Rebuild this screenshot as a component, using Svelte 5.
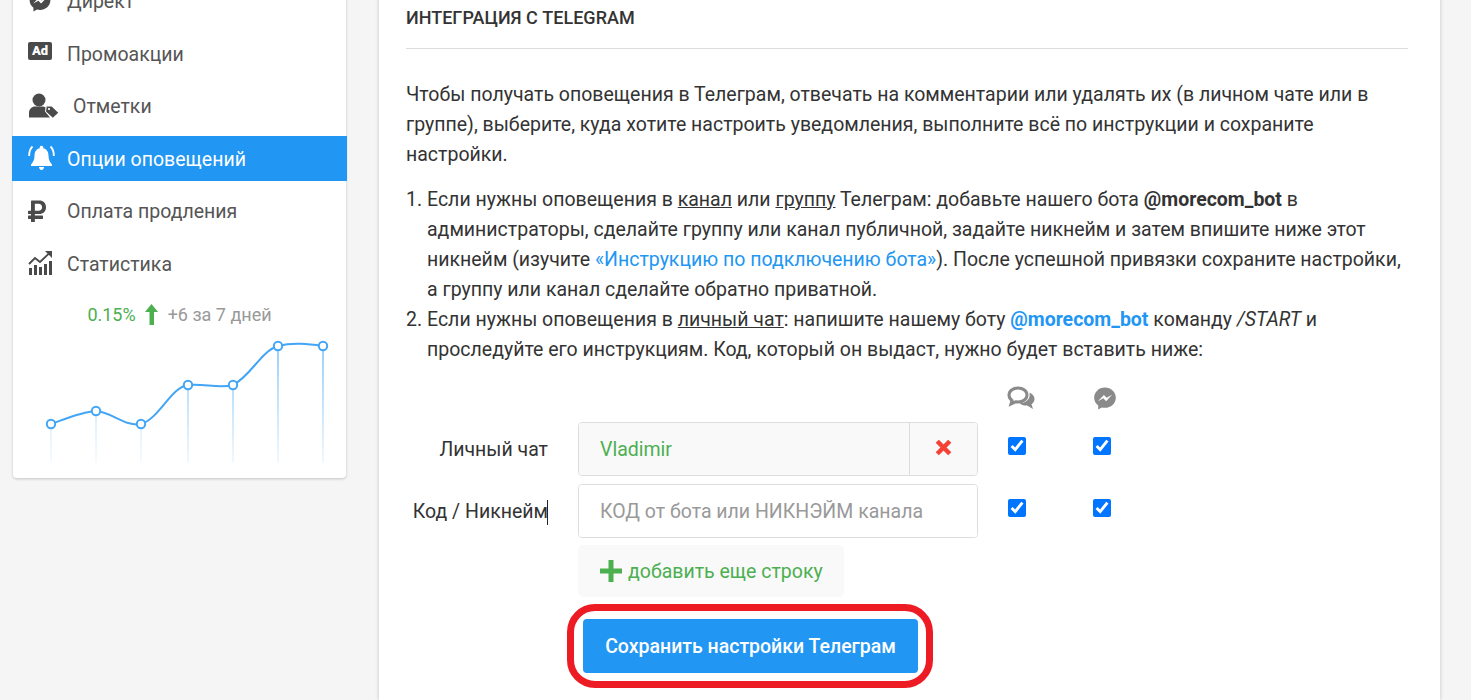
<script>
  const menu = [
    { label: 'Директ', icon: 'messenger' },
    { label: 'Промоакции', icon: 'ad' },
    { label: 'Отметки', icon: 'usertag' },
    { label: 'Опции оповещений', icon: 'bell', active: true },
    { label: 'Оплата продления', icon: 'ruble' },
    { label: 'Статистика', icon: 'stats' }
  ];

  // chart points, in the coordinates of the chart svg
  const points = [[38, 78], [83, 65], [128, 78], [175, 39], [220, 39], [265, 0], [310, 0]];
  const BOTTOM = 117;

  const messengerPath =
    'M224 32C15.9 32-77.5 278 84.6 400.6V480l75.7-42c142.2 39.8 285.4-59.9 285.4-198.7C445.8 124.8 346.5 32 224 32zm23.4 278.1L190 250.5 79.6 311.6l121.1-128.5 57.4 59.6 110.4-61.1-121.1 128.5z';
</script>

<div class="page">
  <aside class="sidebar">
    <nav class="menu">
      {#each menu as item}
        <div class="item" class:active={item.active}>
          <span class="icon">
            {#if item.icon === 'messenger'}
              <svg width="24" height="24" viewBox="0 0 448 512"><path fill="currentColor" d={messengerPath} /></svg>
            {:else if item.icon === 'ad'}
              <span class="ad">Ad</span>
            {:else if item.icon === 'usertag'}
              <svg width="31" height="25" viewBox="0 0 31 25">
                <circle cx="11" cy="7" r="6.5" fill="currentColor" />
                <path fill="currentColor" d="M1 24.500v-4.500c0-4 3-6.500 6-6.500h7c1.500 0 2.600.4 3.500 1l-.5 4 5 6z" />
                <path fill="currentColor" d="M18.700 13.500h5l6.500 6.300-5.400 5-6.800-6.400z" />
                <circle cx="21" cy="16" r="1.100" fill="#fff" />
              </svg>
            {:else if item.icon === 'bell'}
              <svg width="27" height="26" viewBox="0 0 27 26">
                <path fill="currentColor" d="M13.500 3c4.500 0 7 3.300 7 7.500 0 4.500 1.500 6.700 3.500 9v1.500H3v-1.500c2-2.300 3.500-4.500 3.500-9C6.500 6.300 9 3 13.500 3z" />
                <path fill="currentColor" d="M11 22h5c0 1.500-1 3-2.500 3S11 23.500 11 22z" />
                <circle cx="13.500" cy="2.500" r="1.800" fill="currentColor" />
                <path fill="none" stroke="currentColor" stroke-width="1.800" d="M4.500 1.500C2 4 1 7 1.200 11M22.500 1.500C25 4 26 7 25.800 11" />
              </svg>
            {:else if item.icon === 'ruble'}
              <svg width="18" height="24" viewBox="0 0 384 512"><path fill="currentColor" d="M239.360 320C324.480 320 384 260.542 384 175.071S324.480 32 239.360 32H76c-6.627 0-12 5.373-12 12v206.632H12c-6.627 0-12 5.373-12 12V308c0 6.627 5.373 12 12 12h52v32H12c-6.627 0-12 5.373-12 12v52c0 6.627 5.373 12 12 12h52v52c0 6.627 5.373 12 12 12h58.560c6.627 0 12-5.373 12-12v-52H308c6.627 0 12-5.373 12-12v-52c0-6.627-5.373-12-12-12H146.560v-32h92.800zm-92.800-219.252h78.720c46.720 0 74.880 29.110 74.880 74.323 0 45.832-28.160 75.561-76.160 75.561h-77.440V100.748z" /></svg>
            {:else}
              <svg width="24" height="24" viewBox="0 0 24 24">
                <path fill="currentColor" d="M1 17h3v7H1zM6 14h3v10H6zM11 16h3v8h-3zM16 13h3v11h-3zM21 10h3v14h-3z" />
                <path fill="none" stroke="currentColor" stroke-width="1.800" d="M1 13l6-6 5 4 9.500-9" />
                <path fill="currentColor" d="M17 0h7v7z" />
              </svg>
            {/if}
          </span>
          <span class="label" class:shifted={item.icon === 'usertag'}>{item.label}</span>
        </div>
      {/each}
    </nav>

    <div class="stats">
      <span class="pct">0.15%</span>
      <svg class="up" width="13" height="21" viewBox="0 0 13 21"><path fill="#4caf50" d="M6.500 0L13 8H9v13H4.500V8H0z" /></svg>
      <span class="delta">+6 за 7 дней</span>
    </div>
    <svg class="chart" width="333" height="122" viewBox="0 -5 333 122">
      <defs>
        <linearGradient id="drop" gradientUnits="userSpaceOnUse" x1="0" y1="0" x2="0" y2="117">
          <stop offset="0" stop-color="#2196f3" stop-opacity="0.6" />
          <stop offset="1" stop-color="#2196f3" stop-opacity="0.08" />
        </linearGradient>
      </defs>
      {#each points as [x, y], i}
        <rect x={x - (i > 2 ? 0.75 : 0.5)} y={y} width={i > 2 ? 1.5 : 1} height={BOTTOM - y} fill="url(#drop)" />
      {/each}
      <path fill="none" stroke="#42a5f5" stroke-width="2"
        d="M38 78C52 73 68 66 83 65C99 66 112 81 128 78C146 73 158 41 175 39C190 37 206 43 220 39C238 30 248 5 265 0C280 -4 296 -2 310 0" />
      {#each points as [x, y]}
        <circle cx={x} cy={y} r="4.200" fill="#fff" stroke="#42a5f5" stroke-width="2" />
      {/each}
    </svg>
  </aside>

  <main class="content">
    <h2>ИНТЕГРАЦИЯ С TELEGRAM</h2>
    <p>Чтобы получать оповещения в Телеграм, отвечать на комментарии или удалять их (в личном чате или в группе), выберите, куда хотите настроить уведомления, выполните всё по инструкции и сохраните настройки.</p>
    <ol>
      <li>Если нужны оповещения в <u>канал</u> или <u>группу</u> Телеграм: добавьте нашего бота <b>@morecom_bot</b> в администраторы, сделайте группу или канал публичной, задайте никнейм и затем впишите ниже этот никнейм (изучите <span class="link">«Инструкцию по подключению бота»</span>). После успешной привязки сохраните настройки, а группу или канал сделайте обратно приватной.</li>
      <li>Если нужны оповещения в <u>личный чат</u>: напишите нашему боту <b class="link">@morecom_bot</b> команду <i>/START</i> и проследуйте его инструкциям. Код, который он выдаст, нужно будет вставить ниже:</li>
    </ol>

    <div class="form">
      <span></span>
      <span></span>
      <span class="head first">
        <svg width="28" height="25" viewBox="0 0 28 25">
          <path fill="none" stroke="#8a8a8a" stroke-width="3" d="M11 2C6 2 2 5 2 9c0 2.300 1.200 4.200 3 5.500L4 18l4.500-2.200c.8.200 1.700.200 2.500.200 5 0 9-3 9-7s-4-7-9-7z" />
          <path fill="#8a8a8a" d="M22.500 6.500C25.500 8 27.500 10.300 27.500 13c0 2.200-1.200 4-3 5.300l1.500 4.700-6-3.500c-3 .2-5.700-.6-7.500-2.300 5.500 0 11.500-3.500 10-10.700z" />
        </svg>
      </span>
      <span class="head second">
        <svg width="24" height="25" viewBox="0 0 448 512"><path fill="#8a8a8a" d={messengerPath} /></svg>
      </span>

      <label for="chat">Личный чат</label>
      <div class="group">
        <input id="chat" class="filled" value="Vladimir" readonly />
        <span class="remove">
          <svg width="17" height="17" viewBox="0 0 15 15"><path fill="none" stroke="#f44336" stroke-width="4" d="M2 2l11 11M13 2L2 13" /></svg>
        </span>
      </div>
      <span class="check"><input type="checkbox" checked /></span>
      <span class="check"><input type="checkbox" checked /></span>

      <label for="code">Код / Никнейм<span class="caret"></span></label>
      <div class="group">
        <input id="code" placeholder="КОД от бота или НИКНЭЙМ канала" />
      </div>
      <span class="check"><input type="checkbox" checked /></span>
      <span class="check"><input type="checkbox" checked /></span>

      <span></span>
      <div class="actions">
        <button class="add">
          <svg width="22" height="22" viewBox="0 0 22 22"><path fill="#4caf50" d="M8.500 0h5v8.500H22v5h-8.500V22h-5v-8.500H0v-5h8.500z" /></svg>
          добавить еще строку
        </button>
        <div class="ring">
          <button class="save">Сохранить настройки Телеграм</button>
        </div>
      </div>
    </div>
  </main>
</div>

<style>
  :global(body) {
    margin: 0;
  }

  .page {
    display: flex;
    gap: 33px;
    height: 700px;
    overflow: hidden;
    box-sizing: border-box;
    padding-left: 13px;
    background: #f5f5f5;
    font-family: Roboto, sans-serif;
    font-size: 19.5px;
    line-height: 30px;
    color: #333;
  }

  .sidebar {
    flex: none;
    width: 333px;
    height: 500px;
    margin-top: -22px;
    background: #fff;
    border-radius: 0 0 4px 4px;
    box-shadow: 0 1px 3px rgba(0, 0, 0, 0.2);
  }

  .menu {
    display: flex;
    flex-direction: column;
    gap: 7.5px;
  }

  .item {
    display: flex;
    align-items: center;
    height: 45px;
    margin: 0 -1px;
    padding-left: 16px;
    color: #555;
  }

  .item.active {
    background: #2196f3;
    color: #fff;
  }

  .icon {
    flex: none;
    display: flex;
    align-items: center;
    width: 39px;
    color: #4a4a4a;
  }

  .active .icon {
    color: #fff;
  }

  .icon svg {
    display: block;
    overflow: visible;
  }

  .ad {
    width: 24px;
    height: 18px;
    margin-top: -4px;
    border-radius: 2px;
    background: #4a4a4a;
    color: #fff;
    font-size: 13px;
    font-weight: 900;
    line-height: 18px;
    text-align: center;
  }

  .label {
    padding-top: 3px;
  }

  .label.shifted {
    margin-left: 6px;
  }

  .stats {
    display: flex;
    align-items: center;
    justify-content: center;
    gap: 10px;
    margin-top: 14px;
    font-size: 18px;
  }

  .pct {
    color: #4caf50;
    margin-right: -1px;
  }

  .delta {
    color: #999;
  }

  .chart {
    display: block;
    margin-top: 11px;
    overflow: visible;
  }

  .content {
    flex: none;
    width: 1061px;
    height: 740px;
    margin-top: -40px;
    box-sizing: border-box;
    padding: 40px 32px 0 27px;
    background: #fff;
    box-shadow: 0 0 4px rgba(0, 0, 0, 0.2);
  }

  h2 {
    height: 33px;
    margin: 0 0 31px;
    padding: 0 0 15px;
    border-bottom: 1px solid #ddd;
    font-size: 18px;
    font-weight: 500;
    line-height: 36px;
    color: #333;
  }

  p {
    margin: 0 0 15px;
  }

  ol {
    margin: 0;
    padding-left: 21px;
  }

  b {
    font-weight: 700;
  }

  .link {
    color: #2196f3;
  }

  .form {
    display: grid;
    grid-template-columns: 142px 430px 78px 92px;
    margin-top: 16px;
    align-items: center;
  }

  .form > .group,
  .form > .actions {
    margin-left: 30px;
    width: 400px;
  }

  .head {
    height: 35px;
    padding-bottom: 6px;
    display: flex;
    justify-content: center;
    align-items: center;
  }

  .head.first {
    padding-left: 8px;
  }

  .head.second {
    padding-left: 6px;
  }

  .head svg {
    display: block;
  }

  label {
    position: relative;
    margin-bottom: 6px;
    text-align: right;
    white-space: nowrap;
  }

  .caret {
    position: absolute;
    right: 0;
    top: 3px;
    height: 25px;
    border-right: 1px solid #222;
  }

  .group {
    display: flex;
    height: 54px;
    margin-bottom: 8px;
    box-sizing: border-box;
    border: 1px solid #ddd;
    border-radius: 4px;
    overflow: hidden;
  }

  input:not([type]) {
    flex: 1;
    min-width: 0;
    border: 0;
    outline: 0;
    padding: 1px 21px 0;
    font: inherit;
    background: #fff;
    color: #333;
  }

  input::placeholder {
    color: #999;
    opacity: 1;
  }

  input.filled {
    background: #f9f9f9;
    color: #4caf50;
  }

  .remove {
    flex: none;
    display: flex;
    align-items: center;
    justify-content: center;
    padding-bottom: 3px;
    width: 67px;
    background: #f9f9f9;
    border-left: 1px solid #ddd;
  }

  .check {
    display: flex;
    justify-content: center;
    margin-bottom: 14px;
  }

  .check input {
    width: 18px;
    height: 18px;
    margin: 0;
  }

  .actions {
    grid-column: 2 / 5;
    display: flex;
    flex-direction: column;
    align-items: flex-start;
  }

  button {
    font-family: inherit;
    border: 0;
    cursor: pointer;
  }

  .add {
    display: flex;
    align-items: center;
    gap: 6px;
    height: 52px;
    margin-top: -1px;
    padding: 0 21px 0 22px;
    border-radius: 5px;
    background: #f9f9f9;
    color: #4caf50;
    font-size: 19.5px;
  }

  .ring {
    box-sizing: border-box;
    width: 366px;
    height: 84px;
    margin: 7px 0 0 -11px;
    padding: 8px 8px 8px 9px;
    border: 7px solid #ed1c24;
    border-radius: 28px;
  }

  .save {
    display: block;
    width: 100%;
    height: 100%;
    border-radius: 4px;
    background: #2196f3;
    color: #fff;
    font-size: 19.5px;
    font-weight: 500;
  }
</style>
